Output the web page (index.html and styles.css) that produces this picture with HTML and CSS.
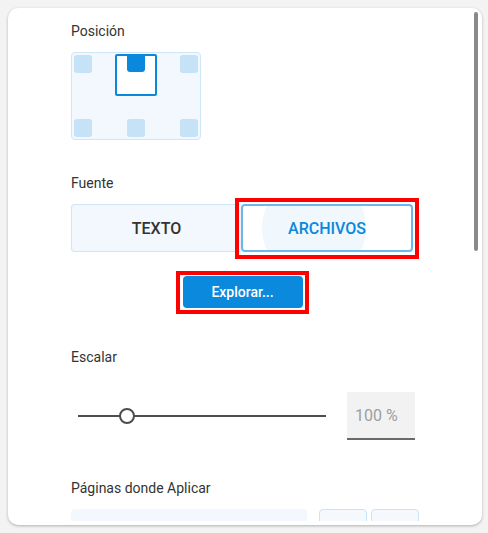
FILE: index.html
```html
<!DOCTYPE html>
<html lang="es">
<head>
<meta charset="utf-8">
<title>Marca de agua</title>
<link rel="stylesheet" href="styles.css">
</head>
<body>
<div class="card">
  <div class="scroll">
    <div class="label">Posición</div>
    <div class="pos-grid">
      <div class="cell"><span class="sq"></span></div>
      <div class="cell selected"><span class="sq"></span></div>
      <div class="cell"><span class="sq"></span></div>
      <div class="cell"><span class="sq"></span></div>
      <div class="cell"><span class="sq"></span></div>
      <div class="cell"><span class="sq"></span></div>
    </div>

    <div class="label label-fuente">Fuente</div>
    <div class="toggle">
      <button class="tg tg-off">TEXTO</button>
      <div class="tg-wrap mark">
        <button class="tg tg-on"><span class="tg-text">ARCHIVOS</span></button>
      </div>
    </div>
    <div class="browse-row">
      <div class="mark mark-browse">
        <button class="browse">Explorar...</button>
      </div>
    </div>

    <div class="label label-escalar">Escalar</div>
    <div class="scale-row">
      <div class="slider">
        <div class="track"></div>
        <div class="thumb"></div>
      </div>
      <div class="num-input">100 %</div>
    </div>

    <div class="label label-paginas">Páginas donde Aplicar</div>
    <div class="pages-row">
      <div class="pages-box"></div>
      <div class="small-box"></div>
      <div class="small-box"></div>
    </div>
  </div>
  <div class="scrollbar"></div>
</div>
</body>
</html>
```

FILE: styles.css
```css
* { box-sizing: border-box; }

html, body {
  margin: 0;
  padding: 0;
  background: #f3f3f3;
  font-family: Roboto, "Liberation Sans", Arial, sans-serif;
}

.card {
  position: relative;
  margin: 8px;
  width: 474px;
  height: 517px;
  background: #ffffff;
  border-radius: 10px;
  box-shadow: 0 1px 3px rgba(0, 0, 0, 0.28);
  padding-bottom: 4px;
}

.scroll {
  height: 513px;
  overflow: hidden;
  padding: 15px 0 0 63px;
}

.scrollbar {
  position: absolute;
  left: 466px;
  top: 4px;
  width: 4px;
  height: 239px;
  border-radius: 2px;
  background: #8a8a8a;
}

.label {
  font-size: 14px;
  line-height: 16px;
  color: #333333;
  height: 16px;
}

/* Position grid */
.pos-grid {
  margin-top: 13px;
  width: 130px;
  height: 88px;
  border: 1px solid #cfe6f8;
  border-radius: 4px;
  background: #f2f8fd;
  padding: 1px;
  display: grid;
  grid-template-columns: repeat(3, 42px);
  grid-template-rows: repeat(2, 42px);
}

.cell {
  display: flex;
  padding: 1px;
  border-radius: 2px;
}
.cell:nth-child(3n+1) { justify-content: flex-start; }
.cell:nth-child(3n+2) { justify-content: center; }
.cell:nth-child(3n) { justify-content: flex-end; }
.cell:nth-child(-n+3) { align-items: flex-start; }
.cell:nth-child(n+4) { align-items: flex-end; }

.sq {
  display: block;
  width: 18px;
  height: 18px;
  border-radius: 3px;
  background: #c5e2f7;
}

.cell.selected {
  background: #ffffff;
  box-shadow: inset 0 0 0 2px #0a88dc;
  padding: 0;
}
.cell.selected .sq {
  background: #0a88dc;
  border-radius: 0 0 3px 3px;
}

.label-fuente { margin-top: 35px; }

/* Toggle */
.toggle {
  margin-top: 13px;
  width: 342px;
  height: 48px;
  display: flex;
}

.tg {
  margin: 0;
  font-family: Roboto, "Liberation Sans", Arial, sans-serif;
  font-size: 16px;
  font-weight: 500;
  cursor: pointer;
  padding: 0;
}

.tg-off {
  flex: 0 0 170px;
  background: #f2f8fd;
  border: 1px solid #cfe6f8;
  border-right: none;
  border-radius: 4px 0 0 4px;
  color: #333333;
}

.tg-wrap {
  flex: 1;
  display: flex;
}

.tg-on {
  flex: 1;
  position: relative;
  overflow: hidden;
  background: #ffffff;
  border: 2px solid #6cb8ec;
  border-radius: 4px;
  color: #0a88dc;
}
.tg-on::before {
  content: "";
  position: absolute;
  left: 19px;
  top: -30px;
  width: 104px;
  height: 104px;
  border-radius: 50%;
  background: #f0f7fd;
}
.tg-text { position: relative; }

/* red annotation frames */
.mark {
  position: relative;
}
.mark::after {
  content: "";
  position: absolute;
  left: -6px;
  top: -6px;
  right: -6px;
  bottom: -7px;
  border: 4px solid #ff0000;
  pointer-events: none;
}
.mark-browse::after {
  top: -5px;
  bottom: -6px;
}

.browse-row {
  width: 342px;
  margin-top: 24px;
  display: flex;
  justify-content: center;
}

.browse {
  display: block;
  width: 120px;
  height: 32px;
  margin: 0 0 0 1px;
  border: none;
  border-radius: 4px;
  background: #0b89dc;
  color: #ffffff;
  font-family: Roboto, "Liberation Sans", Arial, sans-serif;
  font-size: 14px;
  font-weight: 500;
  padding: 0;
}

.label-escalar { margin-top: 41px; }

/* Slider */
.scale-row {
  margin-top: 27px;
  display: flex;
  align-items: center;
  height: 48px;
}

.slider {
  position: relative;
  margin-left: 7px;
  width: 248px;
  height: 16px;
  display: flex;
  align-items: center;
}

.track {
  width: 100%;
  height: 2px;
  background: #4d4d4d;
}

.thumb {
  position: absolute;
  left: 41px;
  top: 0;
  width: 16px;
  height: 16px;
  border-radius: 50%;
  border: 2px solid #4d4d4d;
  background: #ffffff;
}

.num-input {
  margin-left: 21px;
  width: 68px;
  height: 48px;
  background: #f2f2f2;
  border-bottom: 2px solid #6a6a6a;
  color: #9e9e9e;
  font-size: 16px;
  line-height: 48px;
  padding: 0 0 0 8px;
}

.label-paginas { margin-top: 40px; }

.pages-row {
  margin-top: 13px;
  display: flex;
  height: 40px;
}

.pages-box {
  width: 236px;
  height: 40px;
  background: #f2f8fd;
  border-radius: 4px;
}

.small-box {
  width: 48px;
  height: 40px;
  border: 1px solid #c9e3f7;
  background: #f5f9fd;
  border-radius: 4px;
  margin-left: 4px;
}
.pages-box + .small-box { margin-left: 12px; }
```
